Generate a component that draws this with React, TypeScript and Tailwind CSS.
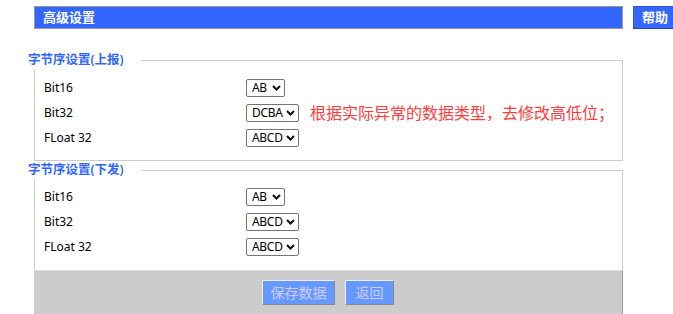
import { useState } from 'react';

const font = "font-['Noto_Sans','Noto_Sans_CJK_SC',sans-serif]";

type Row = { label: string; value: string; options: string[] };

function OrderSelect({ value, options, wide }: { value: string; options: string[]; wide: boolean }) {
  const [v, setV] = useState(value);
  return (
    <div
      className={`inline-flex h-[18px] items-center rounded-[2px] border border-[#767676] bg-white ${wide ? 'w-[53px]' : 'w-[39px]'}`}
    >
      <select
        value={v}
        onChange={(e) => setV(e.target.value)}
        className="min-w-0 flex-1 appearance-none bg-transparent pl-[5px] text-[12px] tracking-[-0.3px] leading-[16px] text-black outline-none"
      >
        {options.map((o) => (
          <option key={o} value={o}>
            {o}
          </option>
        ))}
      </select>
      <svg width="9" height="6" viewBox="0 0 9 6" className="mr-[3px] shrink-0">
        <path d="M1 1 L4.5 4.5 L8 1" fill="none" stroke="#111" strokeWidth="2" />
      </svg>
    </div>
  );
}

function ByteOrderBox({
  title,
  rows,
  note,
  pad,
  last,
}: {
  title: string;
  rows: Row[];
  note?: string;
  pad: string;
  last?: boolean;
}) {
  return (
    <fieldset className={`border border-[#cccccc] ${last ? 'border-b-0' : ''}`}>
      <legend className="ml-[-7px] pr-[17px] text-[12.5px] leading-[18px] font-semibold text-[#3366ff]">
        {title}
      </legend>
      <div className={`flex flex-col gap-[7px] pl-[9px] ${pad}`}>
        {rows.map((r) => (
          <div key={r.label} className="flex h-[18px] items-center">
            <span className="w-[202px] text-[12px] text-black">{r.label}</span>
            <OrderSelect value={r.value} options={r.options} wide={r.options[0].length > 2} />
            {note && r.label === 'Bit32' && (
              <span className="ml-[11px] text-[16px] leading-[18px] whitespace-nowrap text-[#ff3b3b]">
                {note}
              </span>
            )}
          </div>
        ))}
      </div>
    </fieldset>
  );
}

const bit16 = ['AB', 'BA'];
const bit32 = ['ABCD', 'BADC', 'CDAB', 'DCBA'];

export default function App() {
  const upRows: Row[] = [
    { label: 'Bit16', value: 'AB', options: bit16 },
    { label: 'Bit32', value: 'DCBA', options: bit32 },
    { label: 'FLoat 32', value: 'ABCD', options: bit32 },
  ];
  const downRows: Row[] = [
    { label: 'Bit16', value: 'AB', options: bit16 },
    { label: 'Bit32', value: 'ABCD', options: bit32 },
    { label: 'FLoat 32', value: 'ABCD', options: bit32 },
  ];

  return (
    <div className={`h-[314px] w-[673px] overflow-hidden bg-white ${font}`}>
      <div className="flex pt-[6px] pl-[34px]">
        <div className="flex h-[23px] w-[589px] shrink-0 items-center border border-[#999999] bg-[#3366ff] pl-[8px] text-[13px] font-bold text-white">
          高级设置
        </div>
        <button className="ml-[10px] flex h-[23px] w-[48px] shrink-0 items-center border border-[#3355dd] border-b-[#2244bb] bg-[#3366ff] pl-[8px] text-[13px] font-bold text-white">
          帮助
        </button>
      </div>

      <div className="mt-[22px] ml-[34px] w-[589px]">
        <ByteOrderBox
          title="字节序设置(上报)"
          rows={upRows}
          pad="pt-[10px] pb-[13px]"
          note="根据实际异常的数据类型，去修改高低位；"
        />
        <ByteOrderBox title="字节序设置(下发)" rows={downRows} pad="pt-[9px] pb-[14px]" last />
        <div className="flex h-[45px] items-center justify-center gap-[10px] border-t border-r border-b border-[#999999] border-t-[#dddddd] bg-[#cccccc]">
          <button className="h-[25px] w-[73px] border border-[#eeeeff] border-r-[#888888] border-b-[#888888] bg-[#6699ff] text-[14px] text-[#ccccff]">
            保存数据
          </button>
          <button className="h-[25px] w-[49px] border border-[#eeeeff] border-r-[#888888] border-b-[#888888] bg-[#6699ff] text-[14px] text-[#ccccff]">
            返回
          </button>
        </div>
      </div>
    </div>
  );
}
